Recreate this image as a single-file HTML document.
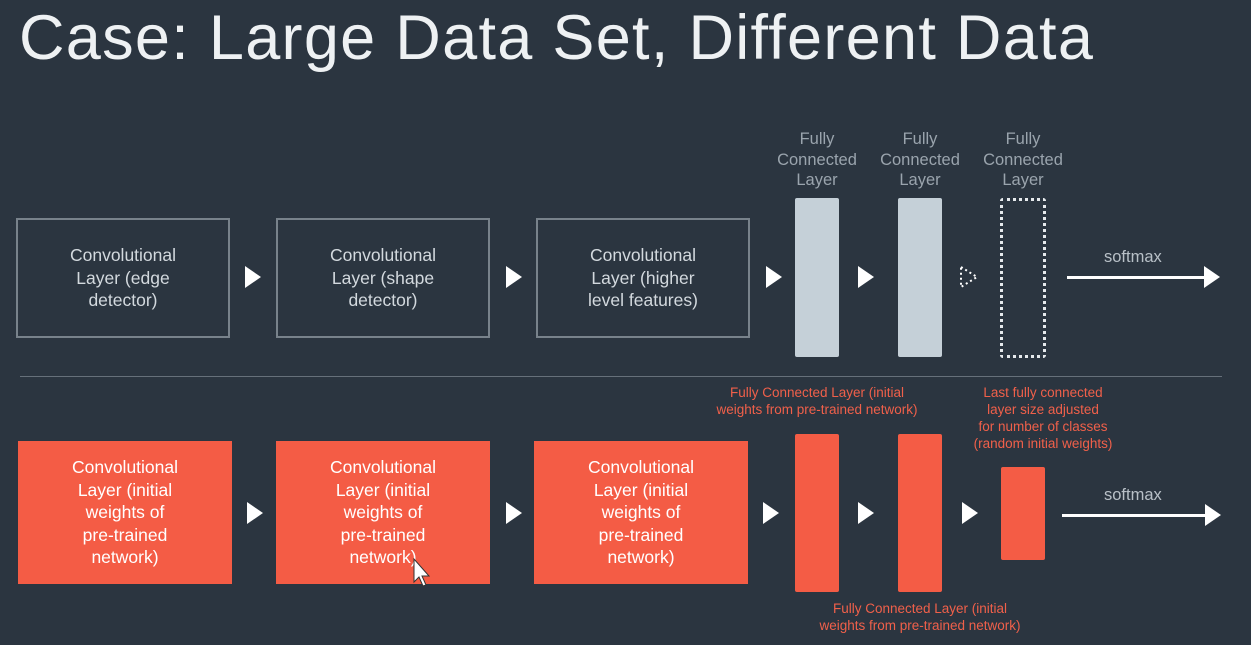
<!DOCTYPE html>
<html><head><style>
*{margin:0;padding:0;box-sizing:border-box}
body{width:1251px;height:645px;overflow:hidden;background:#2b3540;position:relative;font-family:"Liberation Sans",sans-serif}
.a{position:absolute}
.title{left:19px;top:0px;font-size:63px;color:#eef1f3;white-space:nowrap;letter-spacing:1.3px;line-height:76px}
.box{position:absolute;border:2px solid #78828b;display:flex;align-items:center;justify-content:center;text-align:center;color:#d3d9de;font-size:17.5px;line-height:22.5px}
.ob{position:absolute;background:#f45c45;display:flex;align-items:center;justify-content:center;text-align:center;color:#fff;font-size:17.5px;line-height:22.5px}
.tri{position:absolute;width:0;height:0;border-top:11px solid transparent;border-bottom:11px solid transparent;border-left:16px solid #fff}
.bar{position:absolute;background:#c5d0d8;border-radius:2px}
.obar{position:absolute;background:#f45c45;border-radius:2px}
.lbl{position:absolute;width:120px;text-align:center;color:#9aa4ad;font-size:16.5px;line-height:20.5px}
.ol{position:absolute;text-align:center;color:#f0604a;font-size:13.5px;line-height:17px;white-space:nowrap}
.sm{position:absolute;color:#b8c0c7;font-size:16.5px}
.line{position:absolute;height:3px;background:#fff}
</style></head><body>
<div class="a title">Case: Large Data Set, Different Data</div>

<div class="box" style="left:16px;top:218px;width:214px;height:120px">Convolutional<br>Layer (edge<br>detector)</div>
<div class="box" style="left:276px;top:218px;width:214px;height:120px">Convolutional<br>Layer (shape<br>detector)</div>
<div class="box" style="left:536px;top:218px;width:214px;height:120px">Convolutional<br>Layer (higher<br>level features)</div>

<div class="tri" style="left:245px;top:266px"></div>
<div class="tri" style="left:506px;top:266px"></div>
<div class="tri" style="left:766px;top:266px"></div>
<div class="tri" style="left:858px;top:266px"></div>
<svg class="a" style="left:958px;top:264px" width="24" height="26"><path d="M3 3 L19 13 L3 23 Z" fill="none" stroke="#fff" stroke-width="2" stroke-dasharray="2 3"/></svg>

<div class="lbl" style="left:757px;top:129px">Fully<br>Connected<br>Layer</div>
<div class="lbl" style="left:860px;top:129px">Fully<br>Connected<br>Layer</div>
<div class="lbl" style="left:963px;top:129px">Fully<br>Connected<br>Layer</div>

<div class="bar" style="left:795px;top:198px;width:44px;height:159px"></div>
<div class="bar" style="left:898px;top:198px;width:44px;height:159px"></div>
<div class="a" style="left:1000px;top:198px;width:46px;height:160px;border:3px dotted #e6eaed;border-radius:3px"></div>

<div class="sm" style="left:1104px;top:248px">softmax</div>
<div class="line" style="left:1067px;top:276px;width:140px"></div>
<div class="tri" style="left:1204px;top:266px"></div>

<div class="a" style="left:20px;top:376px;width:1202px;height:1px;background:#66707a"></div>

<div class="ol" style="left:817px;top:384px;transform:translateX(-50%)">Fully Connected Layer (initial<br>weights from pre-trained network)</div>
<div class="ol" style="left:1043px;top:384px;transform:translateX(-50%)">Last fully connected<br>layer size adjusted<br>for number of classes<br>(random initial weights)</div>
<div class="ol" style="left:920px;top:600px;transform:translateX(-50%)">Fully Connected Layer (initial<br>weights from pre-trained network)</div>

<div class="ob" style="left:18px;top:441px;width:214px;height:143px">Convolutional<br>Layer (initial<br>weights of<br>pre-trained<br>network)</div>
<div class="ob" style="left:276px;top:441px;width:214px;height:143px">Convolutional<br>Layer (initial<br>weights of<br>pre-trained<br>network)</div>
<div class="ob" style="left:534px;top:441px;width:214px;height:143px">Convolutional<br>Layer (initial<br>weights of<br>pre-trained<br>network)</div>

<div class="tri" style="left:247px;top:502px"></div>
<div class="tri" style="left:506px;top:502px"></div>
<div class="tri" style="left:763px;top:502px"></div>
<div class="tri" style="left:858px;top:502px"></div>
<div class="tri" style="left:962px;top:502px"></div>

<div class="obar" style="left:795px;top:434px;width:44px;height:158px"></div>
<div class="obar" style="left:898px;top:434px;width:44px;height:158px"></div>
<div class="obar" style="left:1001px;top:467px;width:44px;height:93px"></div>

<div class="sm" style="left:1104px;top:486px">softmax</div>
<div class="line" style="left:1062px;top:514px;width:144px"></div>
<div class="tri" style="left:1205px;top:504px"></div>

<svg class="a" style="left:413px;top:558px" width="22" height="32"><path d="M1 1 L1 24 L6 19 L10 28 L13 27 L9 18 L16 18 Z" fill="#fff" stroke="#333" stroke-width="1"/></svg>
</body></html>
